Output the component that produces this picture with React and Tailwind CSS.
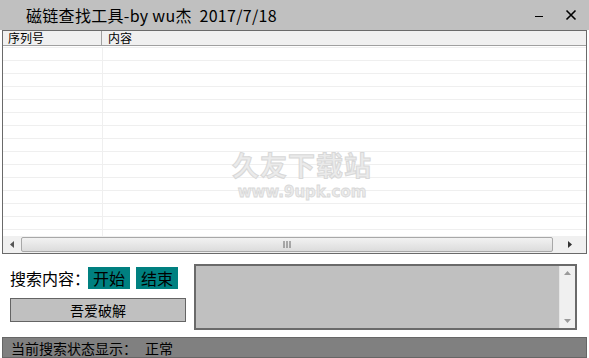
export default function App() {
  const rows = Array.from({ length: 15 });
  return (
    <div
      className="relative w-[589px] h-[358px] overflow-hidden bg-white text-black"
      style={{ fontFamily: '"Noto Sans CJK SC", "Noto Sans", sans-serif' }}
    >
      {/* title bar */}
      <div className="flex h-[30px] items-center bg-[#c0c0c0]">
        <div className="pl-[26px] text-[16px] leading-none whitespace-pre tracking-[0.3px]">磁链查找工具-by wu杰  2017/7/18</div>
        <div className="ml-auto flex items-center gap-[22px] pr-[12px] text-[15px] leading-none">
          <span className="block h-[1px] w-[8px] bg-black mt-[2px]" />
          <svg width="12" height="12" viewBox="0 0 12 12">
            <path d="M1.5 1.5 L10.5 10.5 M10.5 1.5 L1.5 10.5" stroke="#000" strokeWidth="1.6" />
          </svg>
        </div>
      </div>

      {/* list view */}
      <div className="relative ml-[2px] flex h-[224px] w-[585px] flex-col border border-[#6a6a6a] bg-white">
        <div className="flex h-[15px] shrink-0 border-b border-[#a0a0a0] bg-[#f0f0f0] text-[12px] leading-[14px]">
          <div className="w-[99px] border-r border-[#a0a0a0] pl-[5px]">序列号</div>
          <div className="pl-[6px]">内容</div>
        </div>
        <div className="relative flex-1 overflow-hidden pt-[1px]">
          {rows.map((_, i) => (
            <div key={i} className="flex h-[13px] border-t border-[#efefef]">
              <div className="w-[100px] border-r border-[#efefef]" />
            </div>
          ))}
          <div className="absolute left-[229px] top-[105px] flex flex-col items-center text-[#ebebeb]">
            <div className="h-[28px] text-[27px] leading-[28px] font-bold tracking-[1px]" style={{ WebkitTextStroke: '1px #d8d8d8' }}>久友下载站</div>
            <div className="mt-[6px] h-[14px] text-[15px] leading-[14px] font-bold" style={{ fontFamily: '"DejaVu Sans", sans-serif', WebkitTextStroke: '0.8px #d8d8d8' }}>www.9upk.com</div>
          </div>
        </div>
        {/* horizontal scrollbar */}
        <div className="flex h-[17px] shrink-0 items-center bg-[#f0f0f0]">
          <div className="flex w-[18px] justify-center">
            <svg width="4" height="7" viewBox="0 0 4 7"><path d="M4 0 L0 3.5 L4 7 Z" fill="#555" /></svg>
          </div>
          <div className="flex h-[15px] w-[532px] items-center justify-center rounded-[2px] border border-[#a8a8a8] bg-gradient-to-b from-[#f2f2f2] to-[#dcdcdc]">
            <svg width="8" height="7" viewBox="0 0 8 7">
              <path d="M1 0 V7 M4 0 V7 M7 0 V7" stroke="#666" strokeWidth="1" />
            </svg>
          </div>
          <div className="flex flex-1 justify-center">
            <svg width="4" height="7" viewBox="0 0 4 7"><path d="M0 0 L4 3.5 L0 7 Z" fill="#333" /></svg>
          </div>
        </div>
      </div>

      {/* controls */}
      <div className="mt-[10px] flex h-[66px] pl-[10px]">
        <div className="flex w-[176px] flex-col">
          <div className="flex h-[22px] items-center mt-[3px] text-[16px] leading-none">
            <span>搜索内容：</span>
            <button className="ml-[-2px] flex h-[22px] w-[42px] items-center justify-center bg-[#008080] text-[16px] leading-none text-black">开始</button>
            <button className="ml-[6px] flex h-[22px] w-[42px] items-center justify-center bg-[#008080] text-[16px] leading-none text-black">结束</button>
          </div>
          <button className="mt-[9px] flex h-[24px] w-[176px] items-center justify-center border border-[#646464] bg-[#c0c0c0] text-[14px] leading-none">吾爱破解</button>
        </div>
        <div className="ml-[8px] flex h-[66px] w-[383px] border-2 border-[#6a6a6a] bg-[#c0c0c0]">
          <div className="flex-1" />
          <div className="flex w-[16px] flex-col items-center justify-between border-l border-[#e6e6e6] bg-[#f0f0f0] py-[5px]">
            <svg width="7" height="4" viewBox="0 0 7 4"><path d="M0 4 L3.5 0 L7 4 Z" fill="#9a9a9a" /></svg>
            <svg width="7" height="4" viewBox="0 0 7 4"><path d="M0 0 L3.5 4 L7 0 Z" fill="#9a9a9a" /></svg>
          </div>
        </div>
      </div>

      {/* status bar */}
      <div className="ml-[2px] mt-[7px] flex h-[21px] w-[585px] items-center border border-[#666] bg-[#808080] text-[14px] leading-none">
        <span className="pl-[8px]">当前搜索状态显示：</span>
        <span className="pl-[8px]">正常</span>
      </div>
    </div>
  );
}
